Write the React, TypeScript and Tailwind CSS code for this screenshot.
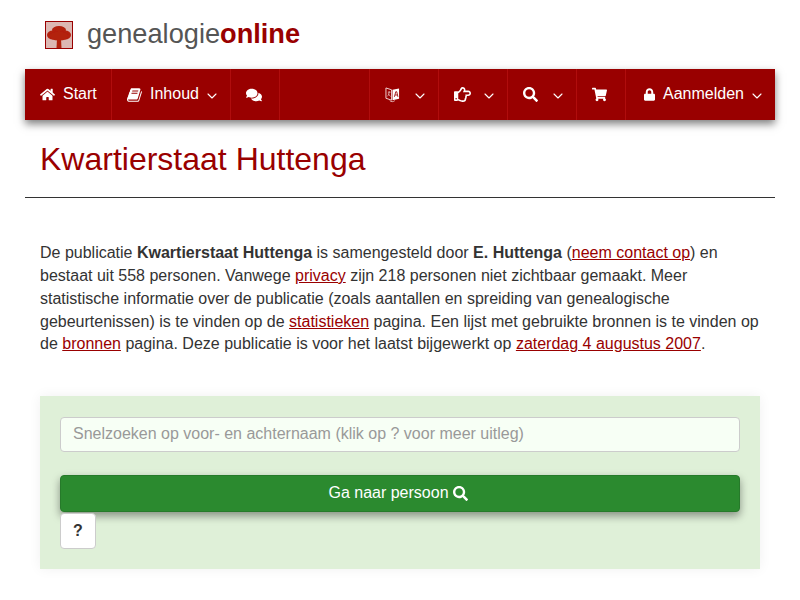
import { FaComments, FaHome, FaLock, FaRegHandPointRight, FaSearch, FaShoppingCart } from "react-icons/fa";
import { ChevronDown } from "lucide-react";
import type { ReactNode } from "react";

const Chevron = ({ className }: { className: string }) => (
  <ChevronDown className={`w-[16px] h-[16px] mt-[2px] shrink-0 ${className}`} strokeWidth={1.6} aria-hidden="true" />
);

function NavCell({ width, children, last }: { width: string; children: ReactNode; last?: boolean }) {
  return (
    <div className={`${width} h-full flex items-center shrink-0 ${last ? "" : "border-r border-[#b00d0d]"}`}>
      {children}
    </div>
  );
}

function BookIcon() {
  return (
    <svg viewBox="0 0 1792 1792" className="w-[16px] h-[16px] ml-[15px] mr-[7px] shrink-0" fill="currentColor" aria-hidden="true">
      <path d="M1639 478q40 57 18 129l-275 906q-19 64-76.500 107.500t-122.500 43.500h-923q-77 0-148.500-53.500t-99.500-131.500q-24-67-2-127 0-4 3-27t4-37q1-8-3-21.500t-3-19.500q2-11 8-21t16.500-23.500 16.500-23.500q23-38 45-91.500t30-91.500q3-10 .5-30t-.5-28q3-11 17-28t17-23q21-36 42-92t25-90q1-9-2.500-32t.5-28q4-13 22-30.500t22-22.500q19-26 42.500-84.500t27.500-96.500q1-8-3-25.500t-2-26.500q2-8 9-18t18-23 17-21q8-12 16.500-30.500t15-35 16-36 19.500-32 26.500-23.500 36-11.500 47.500 5.500l-1 3q38-9 51-9h761q74 0 114 56t18 130l-274 906q-36 119-71.500 153.500t-128.500 34.500h-869q-27 0-38 15-11 16-1 43 24 70 144 70h923q29 0 56-15.500t35-41.500l300-987q7-22 5-57 38 15 59 43zm-1064 2q-4 13 2 22.500t20 9.500h608q13 0 25.500-9.500t16.500-22.500l21-64q4-13-2-22.500t-20-9.500h-608q-13 0-25.500 9.500t-16.500 22.500zm-83 256q-4 13 2 22.500t20 9.500h608q13 0 25.500-9.500t16.500-22.500l21-64q4-13-2-22.500t-20-9.500h-608q-13 0-25.500 9.500t-16.500 22.500z" />
    </svg>
  );
}

function TranslateIcon() {
  return (
    <svg viewBox="0 0 16 18" className="w-[15px] h-[17px] ml-[15px] shrink-0" aria-hidden="true">
      <path d="M1 2l6 2v11l-6-2z" fill="none" stroke="#f3dcdc" strokeWidth="1" />
      <path d="M3 6.500h3M4.500 5.500c0 3-1 4.500-2 5.500M3.500 8c.6 1.500 1.500 2.500 2.500 3" fill="none" stroke="#f3dcdc" strokeWidth=".7" />
      <path d="M8 4l7-1.500v11l-7 1.500z" fill="#fff" />
      <path d="M10 11.500l1.500-5.500h1l1.300 5.500M10.700 9.500h2.500" fill="none" stroke="#990000" strokeWidth=".9" />
      <path d="M5 15.500c1.500 1.500 4 1.500 5.500 0" fill="none" stroke="#f3dcdc" strokeWidth=".8" />
    </svg>
  );
}

function TreeLogo() {
  return (
    <svg viewBox="0 0 26 26" className="w-[28px] h-[28px] border border-[#990000] shrink-0" aria-hidden="true">
      <defs>
        <filter id="soft" x="-10%" y="-10%" width="120%" height="120%">
          <feGaussianBlur stdDeviation="0.5" />
        </filter>
      </defs>
      <rect width="26" height="26" fill="#dcb8b3" />
      <g fill="#b3200f" filter="url(#soft)">
        <ellipse cx="13" cy="8" rx="7" ry="4" />
        <ellipse cx="7" cy="13" rx="6" ry="4.500" />
        <ellipse cx="19" cy="13" rx="6" ry="4.500" />
        <ellipse cx="13" cy="14" rx="10" ry="4.500" />
        <path d="M11 17h4l.5 9h-5z" />
      </g>
    </svg>
  );
}

export default function App() {
  return (
    <div className="w-[800px] h-[600px] overflow-hidden bg-white text-[16px] leading-[22.857px] text-[#333] font-['Liberation_Sans',Arial,sans-serif]">
      {/* Logo */}
      <div className="h-[69px] pl-[45px] pt-[21px] flex items-start">
        <TreeLogo />
        <div className="ml-[14px] -mt-[3px] text-[27.2px] leading-[32px] text-[#555]">
          genealogie<span className="font-bold text-[#990000]">online</span>
        </div>
      </div>

      {/* Nav */}
      <nav className="mx-[25px] w-[750px] h-[51px] flex bg-[#990000] text-white shadow-[0_4px_8px_rgba(0,0,0,0.5)]">
        <NavCell width="w-[87px]">
          <FaHome className="w-[15px] h-[15px] ml-[15px] mr-[8px]" />
          Start
        </NavCell>
        <NavCell width="w-[119px]">
          <BookIcon />
          Inhoud
          <Chevron className="ml-[5px]" />
        </NavCell>
        <NavCell width="w-[49px]">
          <FaComments className="w-[16px] h-[16px] ml-[15px]" />
        </NavCell>
        <div className="w-[90px] border-r border-[#b00d0d] shrink-0" />
        <NavCell width="w-[69px]">
          <TranslateIcon />
          <Chevron className="ml-[12px]" />
        </NavCell>
        <NavCell width="w-[69px]">
          <FaRegHandPointRight className="w-[17px] h-[17px] ml-[15px]" />
          <Chevron className="ml-[10px]" />
        </NavCell>
        <NavCell width="w-[69px]">
          <FaSearch className="w-[15px] h-[15px] ml-[15px]" />
          <Chevron className="ml-[12px]" />
        </NavCell>
        <NavCell width="w-[49px]">
          <FaShoppingCart className="w-[15px] h-[15px] ml-[15px]" />
        </NavCell>
        <NavCell width="w-[149px]" last>
          <FaLock className="w-[11px] h-[13px] ml-[18px] mr-[8px]" />
          Aanmelden
          <Chevron className="ml-[5px]" />
        </NavCell>
      </nav>

      {/* Title */}
      <div className="mx-[25px] h-[78px] border-b border-[#333] px-[15px] pt-[22px]">
        <h1 className="text-[32px] leading-[35px] text-[#990000]">Kwartierstaat Huttenga</h1>
      </div>

      <p className="mx-[40px] mt-[44px] w-[720px]">
        De publicatie <b>Kwartierstaat Huttenga</b> is samengesteld door <b>E. Huttenga</b> (
        <a className="text-[#990000] underline">neem contact op</a>) en bestaat uit 558 personen. Vanwege{" "}
        <a className="text-[#990000] underline">privacy</a> zijn 218 personen niet zichtbaar gemaakt. Meer statistische
        informatie over de publicatie (zoals aantallen en spreiding van genealogische gebeurtenissen) is te vinden op de{" "}
        <a className="text-[#990000] underline">statistieken</a> pagina. Een lijst met gebruikte bronnen is te vinden op
        de <a className="text-[#990000] underline">bronnen</a> pagina. Deze publicatie is voor het laatst bijgewerkt op{" "}
        <a className="text-[#990000] underline">zaterdag 4 augustus 2007</a>.
      </p>

      {/* Search */}
      <div className="mx-[40px] mt-[40px] w-[720px] h-[173px] bg-[#dff0d8] px-[20px] pt-[21px] shadow-[0_0_12px_rgba(0,0,0,0.06)]">
        <input
          readOnly
          placeholder="Snelzoeken op voor- en achternaam (klik op ? voor meer uitleg)"
          className="block w-full h-[35px] px-[12px] pb-[2px] rounded-[4px] bg-[#f7fff5] border border-[#ccc] text-[16px] placeholder:text-[#999] outline-none"
        />
        <button className="mt-[23px] w-full h-[37px] flex items-center justify-center pr-[4px] rounded-[4px] bg-[#2b8a2f] border border-[#267a2a] text-white shadow-[0_4px_8px_rgba(0,0,0,0.4)]">
          Ga naar persoon
          <FaSearch className="w-[15px] h-[15px] ml-[4px]" />
        </button>
        <button className="mt-[1px] block w-[36px] h-[36px] rounded-[4px] bg-white border border-[#ccc] font-bold text-[#333]">
          ?
        </button>
      </div>
    </div>
  );
}
